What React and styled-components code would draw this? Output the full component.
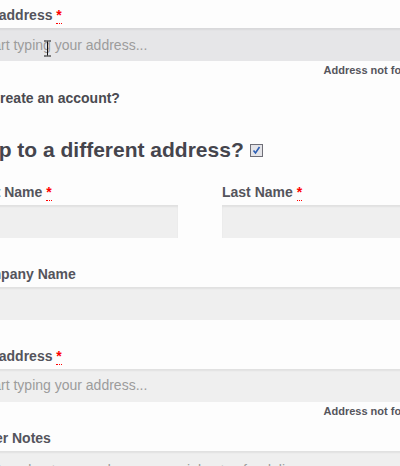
import React from 'react';
import styled, { createGlobalStyle } from 'styled-components';

const Global = createGlobalStyle`
  html, body { margin: 0; padding: 0; background: #fdfdfd; overflow: hidden; }
  body { font-family: "Liberation Sans", Arial, sans-serif; }
`;

const Page = styled.div`
  position: relative;
  width: 400px;
  height: 466px;
  overflow: hidden;
`;

const Form = styled.form`
  margin-left: -30px;
  width: 460px;
  padding-top: 5px;
`;

const Row = styled.div`
  margin: 0 0 ${p => (p.$tight ? '9px' : '26px')};
`;

const Cols = styled.div`
  display: grid;
  grid-template-columns: 208px 208px;
  column-gap: 44px;
  margin-bottom: 26px;
`;

const Label = styled.label`
  display: block;
  font-size: 14px;
  line-height: 21px;
  font-weight: bold;
  color: #54545c;
  margin-bottom: 2px;
`;

const Req = styled.abbr`
  color: #f00;
  text-decoration: none;
  border-bottom: 1px dotted #f00;
  font-weight: bold;
`;

const Field = styled.input`
  display: block;
  box-sizing: border-box;
  width: 100%;
  height: 33px;
  margin: 0;
  padding: 0 10px;
  border: 0;
  outline: none;
  background: ${p => (p.$active ? '#e6e6e8' : '#efefef')};
  box-shadow: inset 0 2px 2px rgba(0, 0, 0, 0.06);
  font-family: "Liberation Sans", Arial, sans-serif;
  font-size: 14px;
  color: #444;
  &::placeholder { color: #9c9c9c; }
`;

const Notes = styled.textarea`
  display: block;
  box-sizing: border-box;
  width: 100%;
  height: 80px;
  margin: 0;
  padding: 9px 10px;
  border: 0;
  outline: none;
  resize: none;
  background: #efefef;
  box-shadow: inset 0 2px 2px rgba(0, 0, 0, 0.06);
  font-family: "Liberation Sans", Arial, sans-serif;
  font-size: 14px;
  line-height: 21px;
  &::placeholder { color: #9c9c9c; }
`;

const Hint = styled.div`
  margin-top: 1px;
  padding-right: 2px;
  text-align: right;
  font-size: 11px;
  line-height: 16.5px;
  font-weight: bold;
  color: #55555c;
`;

const CheckRow = styled.div`
  display: flex;
  align-items: center;
  height: 21px;
  margin: 0;
`;

const Box = styled.input`
  margin: 3px 3px 3px 4px;
  width: 13px;
  height: 13px;
`;

const CheckLabel = styled.label`
  font-size: 14px;
  line-height: 21px;
  font-weight: bold;
  color: #4a4a50;
`;

const Heading = styled.h3`
  display: flex;
  align-items: center;
  margin: 28px 0 19px -4px;
  font-size: 21px;
  line-height: 26px;
  font-weight: bold;
  color: #45454d;
`;

const Tick = styled.svg`
  margin-left: 6px;
  margin-top: 1px;
`;

const Cursor = styled.svg`
  position: absolute;
  left: 43px;
  top: 40px;
`;

export default function App() {
  return (
    <Page>
      <Global />
      <Form>
        <Row $tight>
          <Label>Full address <Req title="required">*</Req></Label>
          <Field $active placeholder="Start typing your address..." />
          <Hint>Address not found?</Hint>
        </Row>

        <CheckRow>
          <Box type="checkbox" />
          <CheckLabel>Create an account?</CheckLabel>
        </CheckRow>

        <Heading>
          Ship to a different address?
          <Tick width="13" height="13" viewBox="0 0 13 13">
            <rect x="0.5" y="0.5" width="12" height="12" fill="#e4e4e8" stroke="#6f6f78" />
            <path d="M3.5 6.5 L5.5 9 L9.5 3" fill="none" stroke="#2c5fb5" strokeWidth="1.6" />
          </Tick>
        </Heading>

        <Cols>
          <div>
            <Label>First Name <Req title="required">*</Req></Label>
            <Field />
          </div>
          <div>
            <Label>Last Name <Req title="required">*</Req></Label>
            <Field />
          </div>
        </Cols>

        <Row>
          <Label>Company Name</Label>
          <Field />
        </Row>

        <Row $tight>
          <Label>Full address <Req title="required">*</Req></Label>
          <Field placeholder="Start typing your address..." />
          <Hint>Address not found?</Hint>
        </Row>

        <Row>
          <Label>Order Notes</Label>
          <Notes placeholder="Notes about your order, e.g. special notes for delivery." />
        </Row>
      </Form>
      <Cursor width="9" height="17" viewBox="0 0 9 17">
        <path d="M1 1 H3.5 M5.5 1 H8 M4.5 1.5 V15.5 M1 16 H3.5 M5.5 16 H8 M3.5 1 H5.5 M3.5 16 H5.5" stroke="#111" strokeWidth="1" fill="none" />
      </Cursor>
    </Page>
  );
}
